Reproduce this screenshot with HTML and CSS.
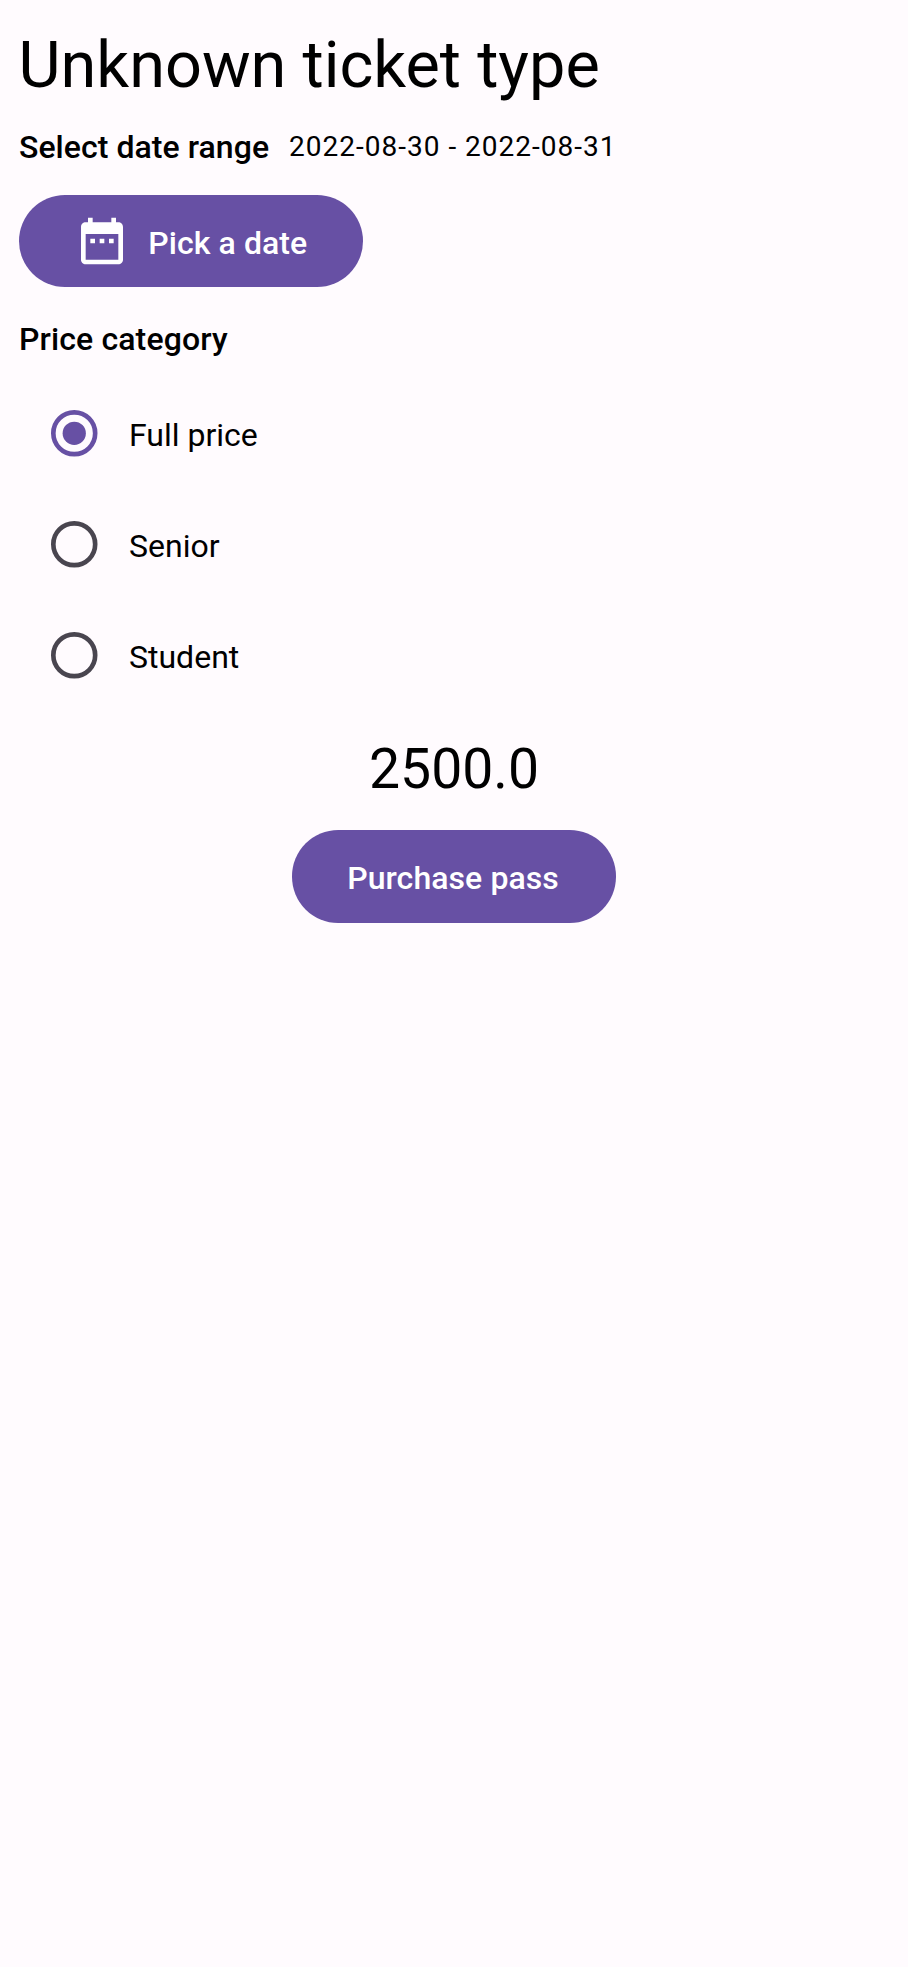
FILE: index.html
```html
<!DOCTYPE html>
<html lang="en">
<head>
<meta charset="utf-8">
<title>Purchase pass</title>
<link rel="stylesheet" href="styles.css">
</head>
<body>
<main class="screen">
  <h1 class="title">Unknown ticket type</h1>
  <div class="range">
    <span class="label">Select date range</span>
    <span class="dates">2022-08-30 - 2022-08-31</span>
  </div>
  <button class="btn pick">
    <svg class="calendar" viewBox="0 0 24 24"><path fill="currentColor" d="M9 11H7v2h2v-2zm4 0h-2v2h2v-2zm4 0h-2v2h2v-2zm2-7h-1V2h-2v2H8V2H6v2H5c-1.110 0-1.990.9-1.990 2L3 20c0 1.100.89 2 2 2h14c1.100 0 2-.9 2-2V6c0-1.100-.9-2-2-2zm0 16H5V9h14v11z"/></svg>
    <span class="btn-text">Pick a date</span>
  </button>
  <h2 class="label category">Price category</h2>
  <div class="options">
    <label class="option"><svg class="radio checked" viewBox="0 0 20 20"><circle class="ring" cx="10" cy="10" r="9"/><circle class="dot" cx="10" cy="10" r="5"/></svg><span class="option-text">Full price</span></label>
    <label class="option"><svg class="radio" viewBox="0 0 20 20"><circle class="ring" cx="10" cy="10" r="9"/></svg><span class="option-text">Senior</span></label>
    <label class="option"><svg class="radio" viewBox="0 0 20 20"><circle class="ring" cx="10" cy="10" r="9"/></svg><span class="option-text">Student</span></label>
  </div>
  <div class="price">2500.0</div>
  <button class="btn buy"><span class="btn-text">Purchase pass</span></button>
</main>
</body>
</html>
```
FILE: styles.css
```css
* { box-sizing: border-box; }
body { margin: 0; background: #fffbfe; color: #000; font-family: Roboto, sans-serif; }
.screen { display: flex; flex-direction: column; align-items: flex-start; min-height: 1967px; padding: 19px 18.500px; }
.title { margin: 0; font-size: 64.800px; line-height: 92px; font-weight: 400; white-space: nowrap; }
.range { display: flex; align-items: center; height: 46px; margin-top: 13px; padding-left: 0.500px; gap: 20px; white-space: nowrap; }
.label { font-size: 32px; line-height: 46px; font-weight: 500; letter-spacing: 0.050px; }
.dates { font-size: 28px; line-height: 40px; letter-spacing: 1px; }
.btn { display: flex; align-items: center; justify-content: center; height: 92.400px; padding: 0; border: 0; border-radius: 46.200px; background: #6750a4; color: #fff; font: 500 32px/46px Roboto, sans-serif; letter-spacing: 0.080px; white-space: nowrap; }
.btn-text { padding-top: 3px; }
.pick { width: 344.500px; margin-top: 25px; gap: 18px; }
.calendar { width: 56px; height: 56px; }
.category { margin: 29px 0 0; padding-left: 0.500px; letter-spacing: 0.120px; }
.options { display: flex; flex-direction: column; margin-top: 15px; }
.option { display: flex; align-items: center; height: 111px; padding-left: 32.500px; gap: 31.500px; font-size: 32px; line-height: 46px; white-space: nowrap; }
.option-text { padding-top: 4px; }
.radio { width: 46.500px; height: 46.500px; fill: none; overflow: visible; }
.ring { stroke: #49454f; stroke-width: 2; }
.checked .ring { stroke: #6750a4; }
.dot { fill: #6750a4; }
.price { align-self: center; margin-top: 23px; font-size: 55.300px; line-height: 74px; }
.buy { align-self: center; width: 324.500px; margin-top: 23px; padding-right: 2px; }
```
